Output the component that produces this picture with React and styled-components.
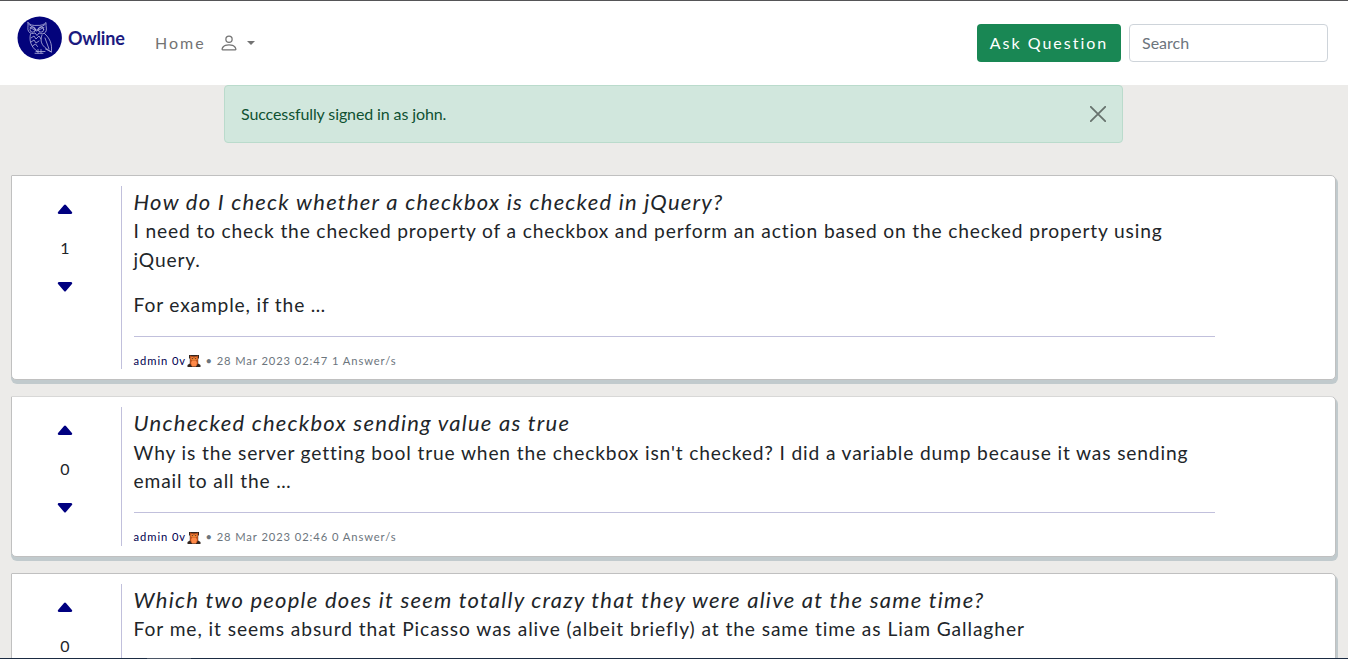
import React from "react";
import styled, { createGlobalStyle } from "styled-components";
import { BsPerson, BsCaretUpFill, BsCaretDownFill } from "react-icons/bs";

const GlobalStyle = createGlobalStyle`
  * { box-sizing: border-box; }
  body {
    margin: 0;
    background: #ecebe9;
    color: #212529;
    font-family: Lato, sans-serif;
    font-size: 16px;
    line-height: 1.5;
    overflow: hidden;
  }
  p { margin: 0; }
`;

const Page = styled.div`
  height: 659px;
  overflow: hidden;
  display: flex;
  flex-direction: column;
  border-top: 1px solid #555557;
`;

const BottomEdge = styled.div`
  flex: none;
  height: 1px;
  background: linear-gradient(90deg, #1b2b42 147px, #4b5666 147px 191px, #1b2b42 191px);
`;

const Navbar = styled.nav`
  flex: none;
  height: 84px;
  display: flex;
  align-items: center;
  padding: 0 20px 0 17px;
  background: #fff;
`;

const Brand = styled.a`
  display: flex;
  align-items: center;
  gap: 6px;
  height: 44px;
  margin-bottom: 11px;
  color: #1b1a80;
  font-size: 18px;
  font-weight: 700;
`;

const BrandName = styled.span`
  width: 58px;
  padding-top: 2px;
  letter-spacing: -0.2px;
`;

const NavLinks = styled.div`
  flex: 1;
  display: flex;
  align-items: center;
  margin-left: 29px;
  color: #737373;
`;

const NavLink = styled.a`
  letter-spacing: 2px;
  width: 63.5px;
`;

const Caret = styled.span`
  margin-left: 8.5px;
  border-top: 4.8px solid;
  border-left: 4.8px solid transparent;
  border-right: 4.8px solid transparent;
`;

const AskButton = styled.button`
  width: 144px;
  height: 38px;
  padding: 0 0 2px;
  border: 0;
  border-radius: 4px;
  background: #198754;
  color: #fff;
  font: 16px Lato, sans-serif;
  letter-spacing: 2px;
`;

const SearchInput = styled.input`
  width: 199px;
  height: 38px;
  margin-left: 8px;
  padding: 5px 12px 7px;
  border: 1px solid #ced4da;
  border-radius: 4px;
  font: 16px Lato, sans-serif;
  &::placeholder { color: #6c757d; opacity: 1; }
`;

const Alert = styled.div`
  flex: none;
  display: flex;
  align-items: center;
  justify-content: space-between;
  width: 899px;
  height: 58px;
  margin: 0 0 32px 224px;
  padding: 0 16px;
  border: 1px solid #badbcc;
  border-radius: 4px;
  background: #d1e7dd;
  color: #0f5132;
  letter-spacing: -0.11px;
`;

const CloseButton = styled.button`
  display: flex;
  padding: 0;
  border: 0;
  background: none;
  color: #000;
  opacity: 0.5;
`;

const QuestionList = styled.main`
  flex: 1;
  min-height: 0;
  overflow: hidden;
  display: flex;
  flex-direction: column;
  gap: 16px;
  padding: 0 12px 0 11px;
`;

const Card = styled.article`
  flex: none;
  display: flex;
  padding: 10px;
  border: 1px solid #c0c0c0;
  border-radius: 1px 5px 5px 5px;
  background: #fff;
  box-shadow: 1px 3px 0 1px #c1cacd;
  clip-path: inset(0 -3px -5px 0);
`;

const Votes = styled.div`
  flex: none;
  width: 99px;
  display: flex;
  flex-direction: column;
  align-items: center;
  padding: 13px 13px 0 0;
  svg { color: #000080; }
`;

const Count = styled.span`
  margin: 17px 0;
  line-height: 24px;
`;

const Content = styled.div`
  flex: 1;
  border-left: 1px solid #c1c0dc;
  padding: 0 110px 0 11.6px;
`;

const Title = styled.h2`
  margin: 0;
  font-size: 22px;
  font-weight: 400;
  font-style: italic;
  letter-spacing: 1.24px;
  line-height: 31.2px;
`;

const Body = styled.div`
  display: flex;
  flex-direction: column;
  gap: 16px;
  font-size: 19.2px;
  line-height: 28.8px;
  letter-spacing: ${(p) => p.$tracking}px;
`;

const Rule = styled.hr`
  margin: 16px 0;
  border: 0;
  border-top: 1px solid #c1c0dc;
`;

const Meta = styled.div`
  display: flex;
  align-items: center;
  height: 16.8px;
  color: #6c757d;
  font-size: 11.2px;
  letter-spacing: 0.92px;
  white-space: pre;
`;

const Author = styled.span`
  color: #000050;
  margin-right: 0.6px;
`;

const Details = styled.span`
  margin-left: 1px;
`;

function OwlLogo() {
  return (
    <svg width="45" height="44" viewBox="0 0 45 44" fill="none">
      <ellipse cx="22.7" cy="22" rx="22.2" ry="21.4" fill="#03037b" />
      <g stroke="#b9b9df" strokeWidth="0.8" strokeLinecap="round" strokeLinejoin="round">
        <path d="M11 6.500c2 2.700 5 3.200 9 2.900 4 .3 7-.7 9-2.900-.3 4.500 1.300 7-.4 9.600-1.400 2-4.800 2.200-6.600.8L20 19.500l-2-2.600c-2 1.200-5 .6-6.300-1.300C10 13 11.500 10.600 11 6.500Z" />
        <path d="M12 8.500l7.500 5.500L28 8.500M13 11.500l6.500 3.500 7.500-3.500" />
        <circle cx="15.700" cy="13.500" r="2.700" />
        <circle cx="24" cy="13.500" r="2.700" />
        <path d="M13.500 18c-1.500 6 0 13 7 17.500M27.500 17.500c5 4.500 8 10 6.800 18.500l-5-3.500C25 29.500 22.500 25 25 19" />
        <path d="M14 22l3-2 2 3 3-3 2 3M14 26l3-2 2 3 3-2M15.500 30l3-2 2 2.500M28 22l4 11" />
        <path d="M19 35.500h9M18 37.300h8M21 33.500v3.500M24 33.500v3.500M28.500 33l5.800 3" />
      </g>
    </svg>
  );
}

function OwlBadge() {
  return (
    <svg width="14" height="14" viewBox="0 0 14 14">
      <path d="M2 1h10v3l-.8 1v4.500l2.300 1.500v2H.5v-2l2.300-1.500V5L2 4Z" fill="#32251f" />
      <path d="M3 1.500l2 .8h4l2-.8v8L9.500 12h-5L3 9.500Z" fill="#b9501c" />
      <path d="M5 6.500h4l1 2.500-1 3.500H5L4 9Z" fill="#ff8a49" />
      <circle cx="5.200" cy="4.500" r="1.700" fill="#eb7a34" />
      <circle cx="8.800" cy="4.500" r="1.700" fill="#eb7a34" />
      <circle cx="5.300" cy="4.500" r=".5" fill="#32251f" />
      <circle cx="8.700" cy="4.500" r=".5" fill="#32251f" />
      <path d="M6.300 5h1.400L7 6.500Z" fill="#f5c13d" />
    </svg>
  );
}

const questions = [
  {
    votes: 1,
    title: "How do I check whether a checkbox is checked in jQuery?",
    body: [
      "I need to check the checked property of a checkbox and perform an action based on the checked property using jQuery.",
      "For example, if the …",
    ],
    meta: "28 Mar 2023 02:47 1 Answer/s",
  },
  {
    votes: 0,
    title: "Unchecked checkbox sending value as true",
    body: [
      "Why is the server getting bool true when the checkbox isn't checked? I did a variable dump because it was sending email to all the …",
    ],
    tracking: 0.85,
    meta: "28 Mar 2023 02:46 0 Answer/s",
  },
  {
    votes: 0,
    title: "Which two people does it seem totally crazy that they were alive at the same time?",
    body: ["For me, it seems absurd that Picasso was alive (albeit briefly) at the same time as Liam Gallagher"],
    tracking: 0.92,
  },
];

function Question({ votes, title, body, meta, tracking = 0.84 }) {
  return (
    <Card>
      <Votes>
        <BsCaretUpFill size={20} />
        <Count>{votes}</Count>
        <BsCaretDownFill size={20} />
      </Votes>
      <Content>
        <Title>{title}</Title>
        <Body $tracking={tracking}>
          {body.map((text) => (
            <p key={text}>{text}</p>
          ))}
        </Body>
        <Rule />
        {meta && (
          <Meta>
            <Author>admin 0v</Author>
            <OwlBadge />
            <Details> • {meta}</Details>
          </Meta>
        )}
      </Content>
    </Card>
  );
}

export default function App() {
  return (
    <>
      <GlobalStyle />
      <Page>
        <Navbar>
          <Brand>
            <OwlLogo />
            <BrandName>Owline</BrandName>
          </Brand>
          <NavLinks>
            <NavLink>Home</NavLink>
            <BsPerson size={20} />
            <Caret />
          </NavLinks>
          <AskButton>Ask Question</AskButton>
          <SearchInput placeholder="Search" />
        </Navbar>
        <Alert>
          Successfully signed in as john.
          <CloseButton aria-label="Close">
            <svg width="16" height="16" viewBox="0 0 16 16">
              <path d="M.8.8l14.400 14.400M15.200.8L.8 15.200" stroke="currentColor" strokeWidth="1.800" strokeLinecap="round" />
            </svg>
          </CloseButton>
        </Alert>
        <QuestionList>
          {questions.map((q) => (
            <Question key={q.title} {...q} />
          ))}
        </QuestionList>
        <BottomEdge />
      </Page>
    </>
  );
}
